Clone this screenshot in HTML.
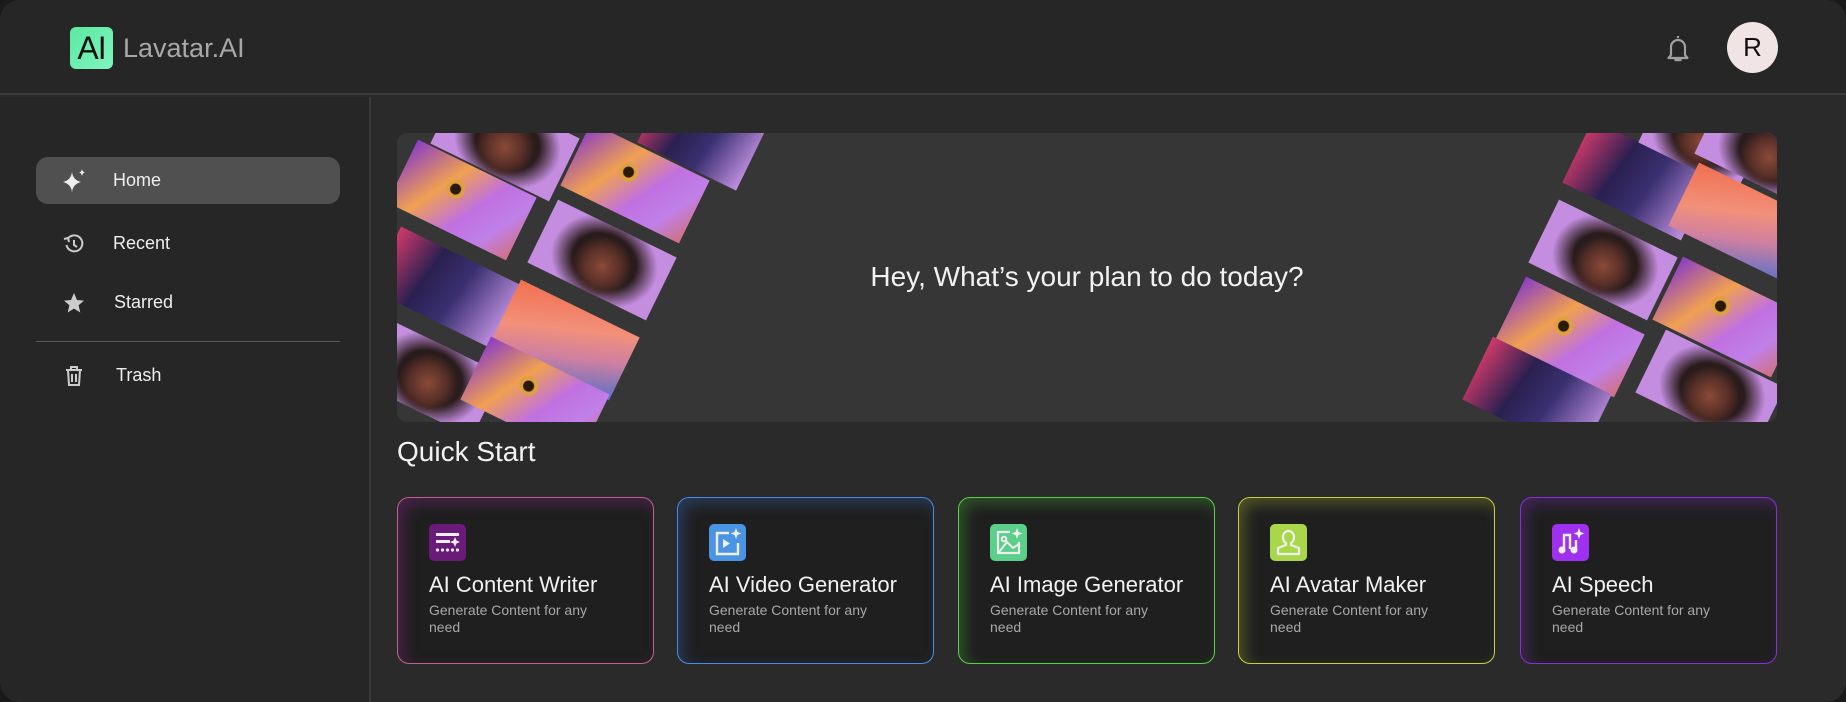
<!DOCTYPE html>
<html><head><meta charset="utf-8"><style>
*{margin:0;padding:0;box-sizing:border-box}
body{width:1846px;height:702px;background:#1a1a1a;font-family:"Liberation Sans",sans-serif;overflow:hidden;position:relative}
.app{position:absolute;left:0;top:0;width:1846px;height:702px;background:#2a2a2a;border-radius:20px;overflow:hidden}
.header{position:absolute;left:0;top:0;width:1846px;height:95px;background:#262626;border-bottom:2px solid #3c3c3c}
.logo{position:absolute;left:70px;top:27px;width:43px;height:42px;border-radius:6px;background:linear-gradient(135deg,#5de8a0,#7ef5c0);color:#111;font-size:32px;line-height:42px;text-align:center;letter-spacing:-1px}
.brand{position:absolute;left:123px;top:33px;font-size:27px;color:#a8a8a8}
.avatar{position:absolute;left:1727px;top:22px;width:51px;height:51px;border-radius:50%;background:#f0e4e4;color:#111;font-size:26px;line-height:51px;text-align:center}
.side{position:absolute;left:0;top:97px;width:371px;height:605px;border-right:2px solid #3a3a3a;background:#262626}
.nav{position:absolute;left:36px;width:304px;height:47px;border-radius:12px;color:#eee;font-size:18px;line-height:47px}
.nav .t{position:absolute;left:77px}
.nav svg{position:absolute;left:26px;top:12px}
.div{position:absolute;left:36px;top:341px;width:304px;height:1px;background:#5a5a5a}
.banner{position:absolute;left:397px;top:133px;width:1380px;height:289px;background:#363636;border-radius:10px;overflow:hidden}
.tile{position:absolute;width:132px;height:70px;transform:translate(-50%,-50%) rotate(26deg)}
.snake{background:radial-gradient(circle at 42% 40%,#2a1a08 0 5px,#e0a040 6px 9px,transparent 10px),linear-gradient(120deg,#8a3cc8,#f0a050 35%,#c070e0 60%,#c080e8 80%,#d07080)}
.face{background:radial-gradient(ellipse 40px 38px at 55% 55%,#7a4030 0 40%,#3a2520 80%,#2a1c1c 100%),#c48de0}
.face{background:radial-gradient(ellipse 30px 30px at 52% 58%,#8a4a38,#5a3028 60%,transparent 100%),radial-gradient(ellipse 55px 45px at 52% 50%,#2a1c1c 60%,transparent 100%),#c48de0}
.feather{background:linear-gradient(160deg,#f07050,#f2907a 40%,#d080a0 65%,#5a70c8)}
.dread{background:linear-gradient(100deg,#d03a6a,#2a2050 35%,#3a3070 60%,#c090e0)}
.hey{position:absolute;left:0;width:100%;top:128px;text-align:center;color:#f2f2f2;font-size:28px}
.qs{position:absolute;left:397px;top:436px;color:#f2f2f2;font-size:28px}
.card{position:absolute;top:497px;width:257px;height:167px;border-radius:12px;background:#1f1f1f;border:1.5px solid}
.card .ic{position:absolute;left:31px;top:26px;width:37px;height:37px;border-radius:5px}
.card .ic svg{position:absolute;left:0;top:0}
.card .h{position:absolute;left:31px;top:74px;color:#f2f2f2;font-size:22px;white-space:nowrap}
.card .s{position:absolute;left:31px;top:104px;width:185px;color:#a8a8a8;font-size:14px;line-height:17px}
</style></head><body><div class="app">
<div class="header">
<div class="logo">AI</div><div class="brand">Lavatar.AI</div>
<svg style="position:absolute;left:1665px;top:34px" width="26" height="30" viewBox="0 0 26 30"><path d="M13 2v2M6 21V13a7 7 0 0 1 14 0v8l2.5 3h-19z" fill="none" stroke="#a0a0a0" stroke-width="2.2" stroke-linejoin="round"/><path d="M10.5 26h5" stroke="#a0a0a0" stroke-width="2.4" stroke-linecap="round"/></svg>
<div class="avatar">R</div>
</div>
<div class="side">
<div class="nav" style="top:60px;background:#505050"><svg width="26" height="24" viewBox="0 0 26 24"><path d="M10 3 Q11 11 19 13 Q11 15 10 23 Q9 15 1 13 Q9 11 10 3Z" fill="#eee"/><path d="M20 0 Q20.5 3 23 3.5 Q20.5 4 20 7 Q19.5 4 17 3.5 Q19.5 3 20 0Z" fill="#eee"/></svg><span class="t">Home</span></div>
<div class="nav" style="top:123px"><svg width="24" height="24" viewBox="0 0 24 24"><path d="M4.5 13A8 8 0 1 0 6 6.5" fill="none" stroke="#ccc" stroke-width="2"/><path d="M2 7l4-1 1 4" fill="none" stroke="#ccc" stroke-width="2"/><path d="M12 8v5l3 2" fill="none" stroke="#ccc" stroke-width="2"/></svg><span class="t">Recent</span></div>
<div class="nav" style="top:182px"><svg width="24" height="24" viewBox="0 0 24 24"><path d="M12 2l3 7 7 .6-5.4 4.6 1.7 7.3L12 17.6 5.7 21.5l1.7-7.3L2 9.6 9 9z" fill="#ccc"/></svg><span class="t" style="left:78px">Starred</span></div>
<div class="div" style="top:244px"></div>
<div class="nav" style="top:255px"><svg width="24" height="24" viewBox="0 0 24 24"><path d="M4 6h16M9 6V3h6v3M6 6l1 15h10l1-15M10 10v8M14 10v8" fill="none" stroke="#ccc" stroke-width="2"/></svg><span class="t" style="left:80px">Trash</span></div>
</div>
<div class="banner">
<div class="tile face" style="left:108px;top:8px"></div>
<div class="tile dread" style="left:305px;top:2px;width:110px"></div>
<div class="tile snake" style="left:65px;top:67px"></div>
<div class="tile snake" style="left:238px;top:50px"></div>
<div class="tile face" style="left:205px;top:127px"></div>
<div class="tile dread" style="left:48px;top:154px"></div>
<div class="tile feather" style="left:168px;top:207px"></div>
<div class="tile face" style="left:31px;top:244px"></div>
<div class="tile snake" style="left:138px;top:264px"></div>
<div class="tile dread" style="left:1240px;top:47px"></div>
<div class="tile face" style="left:1206px;top:127px"></div>
<div class="tile snake" style="left:1173px;top:204px"></div>
<div class="tile dread" style="left:1140px;top:264px"></div>
<div class="tile face" style="left:1306px;top:2px;width:110px"></div>
<div class="tile face" style="left:1372px;top:18px"></div>
<div class="tile feather" style="left:1346px;top:90px"></div>
<div class="tile snake" style="left:1330px;top:184px"></div>
<div class="tile face" style="left:1313px;top:257px"></div>
<div class="hey">Hey, What’s your plan to do today?</div>
</div>
<div class="qs">Quick Start</div>
<div class="card" style="left:397px;border-color:#c06090;box-shadow:inset 6px 6px 14px rgba(150,40,150,.35)"><div class="ic" style="background:#6a1a78"><svg width="37" height="37" viewBox="0 0 37 37"><rect x="7" y="9" width="23" height="3" fill="#eee"/><rect x="7" y="16" width="14" height="3" fill="#eee"/><path d="M26 13l1.5 3.5 3.5 1.5-3.5 1.5-1.5 3.5-1.5-3.5-3.5-1.5 3.5-1.5z" fill="#eee"/><g fill="#eee"><circle cx="8.5" cy="26" r="1.6"/><circle cx="13.5" cy="26" r="1.6"/><circle cx="18.5" cy="26" r="1.6"/><circle cx="23.5" cy="26" r="1.6"/><circle cx="28.5" cy="26" r="1.6"/></g></svg></div><div class="h">AI Content Writer</div><div class="s">Generate Content for any need</div></div>
<div class="card" style="left:677px;border-color:#4a8ae8;box-shadow:inset 6px 6px 14px rgba(60,120,220,.3)"><div class="ic" style="background:#4a94e4"><svg width="37" height="37" viewBox="0 0 37 37"><path d="M20 9H8v21h21V19" fill="none" stroke="#eee" stroke-width="2.4"/><path d="M14 15v9l7-4.5z" fill="#eee"/><path d="M27 4l1.5 4 4 1.5-4 1.5-1.5 4-1.5-4-4-1.5 4-1.5z" fill="#eee"/></svg></div><div class="h">AI Video Generator</div><div class="s">Generate Content for any need</div></div>
<div class="card" style="left:958px;border-color:#5ad04a;box-shadow:inset 6px 6px 14px rgba(80,200,60,.3)"><div class="ic" style="background:#5ccf8a"><svg width="37" height="37" viewBox="0 0 37 37"><path d="M20 8H8v21h21V18" fill="none" stroke="#eee" stroke-width="2.2"/><circle cx="14" cy="15" r="2.3" fill="none" stroke="#eee" stroke-width="2"/><path d="M9 28l8-10 6 6 6-4" fill="none" stroke="#eee" stroke-width="2"/><path d="M27 4l1.5 4 4 1.5-4 1.5-1.5 4-1.5-4-4-1.5 4-1.5z" fill="#eee"/></svg></div><div class="h">AI Image Generator</div><div class="s">Generate Content for any need</div></div>
<div class="card" style="left:1238px;border-color:#c8d040;box-shadow:inset 6px 6px 14px rgba(190,200,50,.3)"><div class="ic" style="background:#a8d84a"><svg width="37" height="37" viewBox="0 0 37 37"><path d="M18.5 7a5.5 6 0 0 1 5.5 6c0 3-1 5-3 6v2l8 3v6H8v-6l8-3v-2c-2-1-3-3-3-6a5.5 6 0 0 1 5.5-6z" fill="none" stroke="#eee" stroke-width="2.2" stroke-linejoin="round"/></svg></div><div class="h">AI Avatar Maker</div><div class="s">Generate Content for any need</div></div>
<div class="card" style="left:1520px;border-color:#8a30d8;box-shadow:inset 6px 6px 14px rgba(140,50,210,.3)"><div class="ic" style="background:#a030f0"><svg width="37" height="37" viewBox="0 0 37 37"><path d="M12 26V11h6v14M24 26V16" fill="none" stroke="#eee" stroke-width="2.4"/><circle cx="10" cy="26" r="3.5" fill="#eee"/><circle cx="22" cy="26" r="3.5" fill="#eee"/><path d="M27 4l1.5 4 4 1.5-4 1.5-1.5 4-1.5-4-4-1.5 4-1.5z" fill="#eee"/></svg></div><div class="h">AI Speech</div><div class="s">Generate Content for any need</div></div>
</div></body></html>
